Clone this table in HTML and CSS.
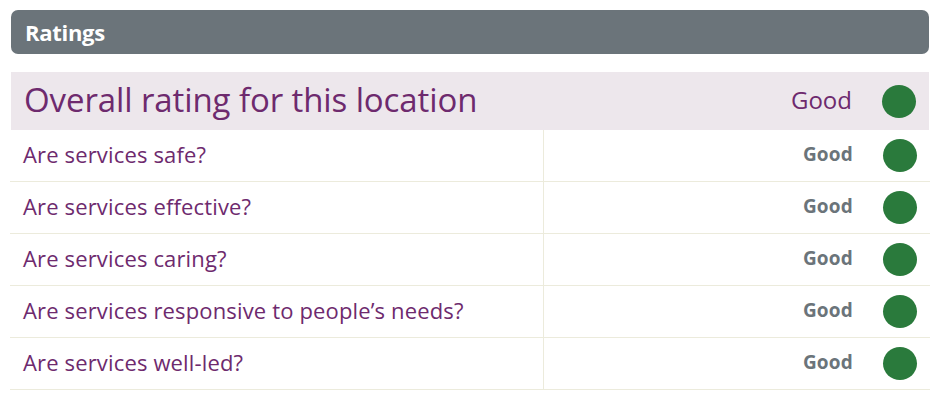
FILE: index.html
```html
<!DOCTYPE html>
<html>
<head>
<meta charset="utf-8">
<link rel="stylesheet" href="styles.css">
</head>
<body>
<div class="wrap">
  <div class="header">Ratings</div>
  <div class="table">
    <div class="overall">
      <div class="o-label">Overall rating for this location</div>
      <div class="o-rating">Good</div>
      <div class="dot"></div>
    </div>
    <div class="row">
      <div class="q">Are services safe?</div>
      <div class="r"><span class="good">Good</span><span class="dot"></span></div>
    </div>
    <div class="row">
      <div class="q">Are services effective?</div>
      <div class="r"><span class="good">Good</span><span class="dot"></span></div>
    </div>
    <div class="row">
      <div class="q">Are services caring?</div>
      <div class="r"><span class="good">Good</span><span class="dot"></span></div>
    </div>
    <div class="row">
      <div class="q">Are services responsive to people’s needs?</div>
      <div class="r"><span class="good">Good</span><span class="dot"></span></div>
    </div>
    <div class="row">
      <div class="q">Are services well-led?</div>
      <div class="r"><span class="good">Good</span><span class="dot"></span></div>
    </div>
  </div>
</div>
</body>
</html>
```
FILE: styles.css
```css
* { box-sizing: border-box; }
body {
  margin: 0;
  background: #fff;
  font-family: "Open Sans", Lato, sans-serif;
}
.wrap {
  padding: 10px 10px 0 11px;
}
.header {
  height: 44px;
  background: #6b747a;
  border-radius: 7px;
  color: #fff;
  font-weight: 700;
  font-size: 22px;
  line-height: 44px;
  padding-left: 14px;
  letter-spacing: -0.3px;
}
.table {
  margin-top: 18px;
}
.overall {
  height: 58px;
  background: #ede7ec;
  display: flex;
  align-items: center;
  padding-left: 13px;
  padding-right: 13px;
}
.o-label {
  flex: 1;
  color: #6e2a6e;
  font-size: 33px;
  letter-spacing: -0.1px;
  line-height: 1;
  padding-bottom: 4px;
}
.o-rating {
  color: #6e2a6e;
  font-size: 24px;
  margin-right: 30px;
  padding-bottom: 3px;
}
.dot {
  width: 34px;
  height: 33px;
  border-radius: 50%;
  background: #2a7a3c;
  display: block;
}
.row {
  display: grid;
  grid-template-columns: 534px 1fr;
  height: 52px;
  border-bottom: 1px solid #ecebdc;
  margin-left: -1px;
  width: 920px;
}
.q {
  border-right: 1px solid #ecebdc;
  display: flex;
  align-items: center;
  padding-left: 13px;
  padding-bottom: 3px;
  color: #6e2a6e;
  font-size: 22px;
  letter-spacing: 0.15px;
}
.r {
  display: flex;
  align-items: center;
  justify-content: flex-end;
  padding-right: 13px;
}
.good {
  color: #6b747a;
  font-weight: 700;
  font-size: 19px;
  margin-right: 30px;
  letter-spacing: 0.2px;
  padding-bottom: 3px;
}
```
